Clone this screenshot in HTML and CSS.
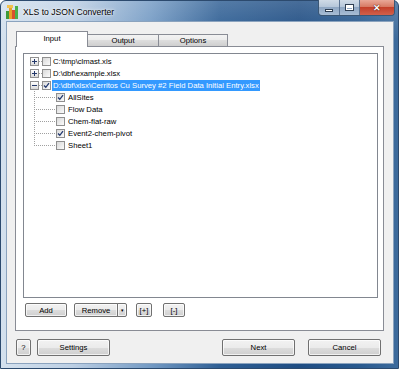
FILE: index.html
```html
<!DOCTYPE html>
<html lang="en">
<head>
<meta charset="UTF-8">
<title>XLS to JSON Converter</title>
<link rel="stylesheet" href="styles.css">
</head>
<body>
    <div class="window">
        <div class="titlebar">
            <svg class="app-icon" width="13" height="14" viewBox="0 0 13 14">
                <rect x="0" y="6" width="3" height="8" fill="#3f9a3a"/>
                <rect x="3" y="3" width="3" height="11" fill="#e8a02a"/>
                <rect x="6" y="5" width="3" height="9" fill="#d9502f"/>
                <rect x="9" y="1" width="3" height="13" fill="#4bb04a"/>
                <rect x="1" y="0" width="6" height="3" fill="#f2c14e"/>
            </svg>
            <span class="title">XLS to JSON Converter</span>
            <div class="controls">
                <span class="ctl min"><i></i></span>
                <span class="ctl max"><i></i></span>
                <span class="ctl close">&#x2715;</span>
            </div>
        </div>

        <div class="client">
            <div class="tabs">
                <div class="tab active">Input</div>
                <div class="tab">Output</div>
                <div class="tab">Options</div>
            </div>

            <div class="panel">
                <div class="tree">
                    <div class="row">
                        <span class="exp plus"></span><span class="dash"></span>
                        <span class="chk"></span>
                        <span class="label">C:\tmp\clmast.xls</span>
                    </div>
                    <div class="row">
                        <span class="exp plus"></span><span class="dash"></span>
                        <span class="chk"></span>
                        <span class="label">D:\dbf\example.xlsx</span>
                    </div>
                    <div class="row">
                        <span class="exp"></span><span class="dash"></span>
                        <span class="chk"><svg viewBox="0 0 7 7"><path d="M1 3.5 L2.8 5.3 L6 1.2" /></svg></span>
                        <span class="label selected">D:\dbf\xlsx\Cerritos Cu Survey #2 Field Data Initial Entry.xlsx</span>
                    </div>

                    <div class="row child">
                        <span class="line"></span>
                        <span class="chk"><svg viewBox="0 0 7 7"><path d="M1 3.5 L2.8 5.3 L6 1.2" /></svg></span>
                        <span class="label">AllSites</span>
                    </div>
                    <div class="row child">
                        <span class="line"></span>
                        <span class="chk"></span>
                        <span class="label">Flow Data</span>
                    </div>
                    <div class="row child">
                        <span class="line"></span>
                        <span class="chk"></span>
                        <span class="label">Chem-flat-raw</span>
                    </div>
                    <div class="row child">
                        <span class="line"></span>
                        <span class="chk"><svg viewBox="0 0 7 7"><path d="M1 3.5 L2.8 5.3 L6 1.2" /></svg></span>
                        <span class="label">Event2-chem-pivot</span>
                    </div>
                    <div class="row child last">
                        <span class="line"></span>
                        <span class="chk"></span>
                        <span class="label">Sheet1</span>
                    </div>
                </div>

                <div class="toolbar">
                    <button class="btn btn-add">Add</button>
                    <button class="btn btn-remove">Remove</button>
                    <button class="btn btn-drop">&#9662;</button>
                    <button class="btn btn-expand">[+]</button>
                    <button class="btn btn-collapse">[-]</button>
                </div>
            </div>

            <div class="footer">
                <button class="btn btn-help">?</button>
                <button class="btn btn-wide">Settings</button>
                <button class="btn btn-wide btn-next">Next</button>
                <button class="btn btn-wide">Cancel</button>
            </div>
        </div>
    </div>
</body>
</html>
```

FILE: styles.css
```css
* {
    box-sizing: border-box;
}
body {
    margin: 0;
    padding: 0;
    background-color: #fff;
    font-family: 'Liberation Sans', Arial, sans-serif;
    font-size: 7.7px;
    color: #000;
}

/* window frame */
.window {
    width: 399px;
    height: 369px;
    border: 1px solid #2c4a6e;
    border-radius: 6px 6px 0 0;
    display: flex;
    flex-direction: column;
    background:
        linear-gradient(rgba(255, 255, 255, 0.18), rgba(255, 255, 255, 0) 40px),
        linear-gradient(to right, #d4e1ee 0%, #bccfe4 18%, #7299c3 38%, #2f5f94 55%, #1f4d83 75%, #28598e 90%, #3d6b9c 100%);
}
.titlebar {
    height: 21px;
    display: flex;
    align-items: center;
    padding-left: 5px;
}
.app-icon {
    margin-right: 4px;
    flex: none;
}
.title {
    font-size: 8.6px;
    color: #000;
    text-shadow: 0 0 4px rgba(255, 255, 255, 0.9), 0 0 2px rgba(255, 255, 255, 0.9);
}
.controls {
    margin-left: auto;
    margin-right: 3px;
    align-self: flex-start;
    display: flex;
    height: 16px;
    margin-top: -1px;
    border: 1px solid #3b5775;
    border-top: none;
    border-radius: 0 0 4px 4px;
    overflow: hidden;
}
.ctl {
    height: 15px;
    display: flex;
    align-items: center;
    justify-content: center;
    background: linear-gradient(#d0dbe7, #b6c7da 45%, #8fa7c3 50%, #a8bdd5);
    border-right: 1px solid #5a7393;
}
.ctl i {
    display: block;
    border: 1px solid #2e3e52;
    background-color: #fff;
}
.min {
    width: 21px;
}
.min i {
    width: 8px;
    height: 3px;
    margin-top: 5px;
}
.max {
    width: 20px;
}
.max i {
    width: 9px;
    height: 7px;
    background-color: transparent;
    box-shadow: inset 0 0 0 1px #fff, inset 0 2px 0 1px #fff;
}
.close {
    width: 34px;
    border-right: none;
    color: #fff;
    font-size: 9px;
    font-weight: bold;
    text-shadow: 0 0 1px #4a1208, 0 0 1px #4a1208;
    background: linear-gradient(#e9a898, #d77a64 45%, #c4402a 50%, #d2604b);
}

/* client area */
.client {
    flex: 1;
    margin: 0 5px 5px 6px;
    background-color: #f0f0f0;
    box-shadow: 0 0 0 1px #8ba3be;
    display: flex;
    flex-direction: column;
    padding: 9px 9px 0 8px;
}
.tabs {
    display: flex;
    align-items: flex-end;
    height: 16px;
    margin-left: 1px;
}
.tab {
    height: 12px;
    margin-bottom: 1px;
    width: 72px;
    border: 1px solid #898c95;
    border-bottom: none;
    background: linear-gradient(#f3f3f3, #ebebeb 50%, #dddddd 50%, #cfcfcf);
    display: flex;
    align-items: center;
    justify-content: center;
    margin-left: -1px;
}
.tab:first-child {
    margin-left: 0;
}
.tab:last-child {
    width: 70px;
}
.tab.active {
    height: 16px;
    margin-bottom: 0;
    background: #fff;
    position: relative;
    z-index: 1;
    padding-bottom: 2px;
}

.panel {
    margin-top: -1px;
    height: 285px;
    border: 1px solid #898c95;
    background-color: #fff;
    padding: 6px 5px 13px 7px;
    display: flex;
    flex-direction: column;
}

/* tree */
.tree {
    height: 245px;
    border: 1px solid #828790;
    background-color: #fff;
    padding-top: 1px;
}
.row {
    height: 12px;
    display: flex;
    align-items: center;
    padding-left: 6px;
    white-space: nowrap;
}
.exp {
    width: 9px;
    height: 9px;
    flex: none;
    border: 1px solid #919191;
    background:
        linear-gradient(#23386a, #23386a) center / 5px 1px no-repeat,
        linear-gradient(#fff, #dadada);
}
.exp.plus {
    background:
        linear-gradient(#23386a, #23386a) center / 5px 1px no-repeat,
        linear-gradient(#23386a, #23386a) center / 1px 5px no-repeat,
        linear-gradient(#fff, #dadada);
}
.dash {
    width: 3px;
    height: 1px;
    background: repeating-linear-gradient(to right, #a0a0a0 0 1px, transparent 1px 2px);
}
.chk {
    width: 9px;
    height: 9px;
    flex: none;
    border: 1px solid #8f8f8f;
    background: linear-gradient(135deg, #d8d8d8, #fbfbfb);
    display: flex;
    align-items: center;
    justify-content: center;
}
.chk svg {
    width: 7px;
    height: 7px;
}
.chk path {
    fill: none;
    stroke: #22386f;
    stroke-width: 1.3;
}
.label {
    margin-left: 1px;
    padding: 0 1px;
    height: 11px;
    line-height: 11px;
}
.label.selected {
    background-color: #3399ff;
    color: #fff;
}
.child .line {
    align-self: stretch;
    width: 22px;
    margin-left: 4px;
    flex: none;
    background:
        repeating-linear-gradient(to bottom, #a0a0a0 0 1px, transparent 1px 2px) left top / 1px 100% no-repeat,
        repeating-linear-gradient(to right, #a0a0a0 0 1px, transparent 1px 2px) left 6px / 21px 1px no-repeat;
}
.child.last .line {
    background:
        repeating-linear-gradient(to bottom, #a0a0a0 0 1px, transparent 1px 2px) left top / 1px 7px no-repeat,
        repeating-linear-gradient(to right, #a0a0a0 0 1px, transparent 1px 2px) left 6px / 21px 1px no-repeat;
}
.child .label {
    margin-left: 2px;
}

/* buttons */
.btn {
    font-family: 'Liberation Sans', Arial, sans-serif;
    font-size: 7.7px;
    color: #000;
    padding: 0;
    border: 1px solid #707070;
    border-radius: 2px;
    background: linear-gradient(#f2f2f2, #ebebeb 50%, #dddddd 50%, #cfcfcf);
    box-shadow: inset 0 0 0 1px rgba(255, 255, 255, 0.7);
    height: 14px;
    flex: none;
}
.toolbar {
    margin-top: 5px;
    padding-left: 2px;
    display: flex;
}
.btn-add {
    width: 42px;
    margin-right: 7px;
}
.btn-remove {
    width: 44px;
    border-radius: 2px 0 0 2px;
}
.btn-drop {
    width: 10px;
    margin-left: -1px;
    font-size: 5px;
    border-radius: 0 2px 2px 0;
}
.btn-expand {
    width: 16px;
    margin-left: 9px;
}
.btn-collapse {
    width: 22px;
    margin-left: 11px;
}

.footer {
    margin-top: 8px;
    padding-left: 1px;
    padding-right: 3px;
    display: flex;
}
.footer .btn {
    height: 17px;
}
.btn-help {
    width: 15px;
    margin-right: 6px;
}
.btn-wide {
    width: 73px;
}
.btn-next {
    margin-left: auto;
    margin-right: 13px;
}
```
